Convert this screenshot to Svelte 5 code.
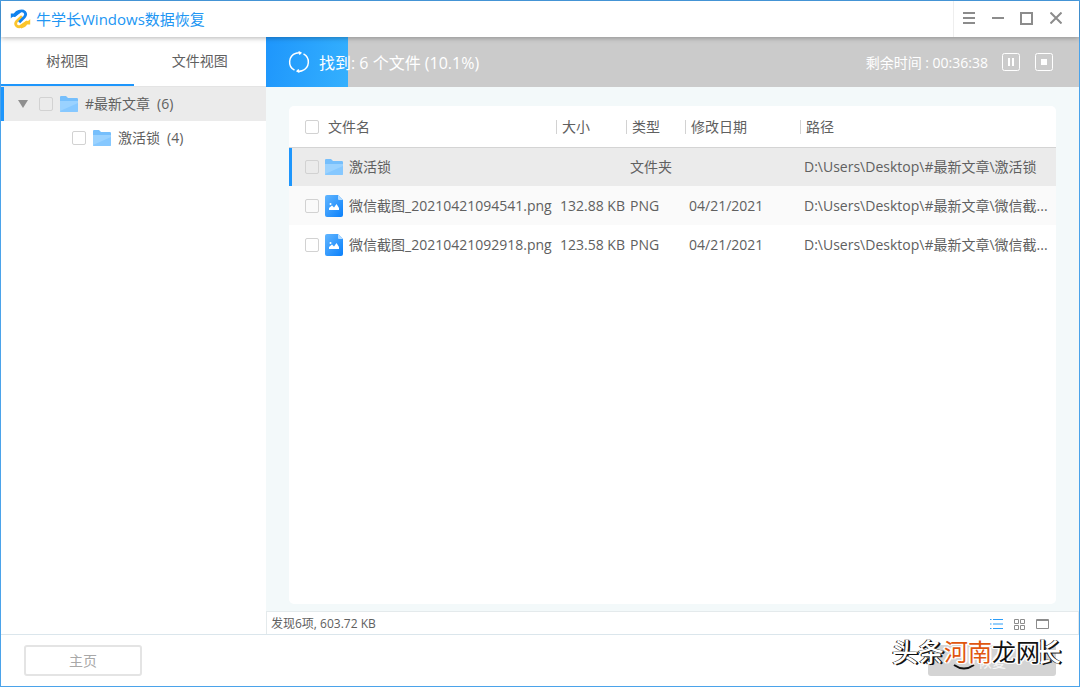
<script>
  const files = [
    { kind: 'folder', name: '激活锁', size: '', type: '文件夹', date: '', path: 'D:\\Users\\Desktop\\#最新文章\\激活锁', active: true },
    { kind: 'image', name: '微信截图_20210421094541.png', size: '132.88 KB', type: 'PNG', date: '04/21/2021', path: 'D:\\Users\\Desktop\\#最新文章\\微信截...' },
    { kind: 'image', name: '微信截图_20210421092918.png', size: '123.58 KB', type: 'PNG', date: '04/21/2021', path: 'D:\\Users\\Desktop\\#最新文章\\微信截...' }
  ];
  const progress = 10.1;
</script>

{#snippet folder()}
  <svg class="folder" width="18" height="16" viewBox="0 0 18 16" aria-hidden="true">
    <path d="M0 1.2Q0 0 1 0H6L8 2H16.8Q18 2 18 3V8H0Z" fill="#76bffc" />
    <path d="M0 5H18V15Q18 16 17 16H1Q0 16 0 15Z" fill="#9ad2ff" />
    <path d="M18 7V15Q18 16 17 16H1Q0 16 0 15Z" fill="#86c8ff" />
  </svg>
{/snippet}

{#snippet picture()}
  <svg class="picture" width="18" height="22" viewBox="0 0 18 22" aria-hidden="true">
    <defs>
      <linearGradient id="pic" x1="0" y1="0" x2="1" y2="1">
        <stop offset="0" stop-color="#62b6ff" />
        <stop offset="1" stop-color="#0a80fb" />
      </linearGradient>
    </defs>
    <path d="M2 0H13L18 5V20Q18 22 16 22H2Q0 22 0 20V2Q0 0 2 0Z" fill="url(#pic)" />
    <path d="M13 0L18 5H14Q13 5 13 4Z" fill="#b4dcff" />
    <path d="M4 15V13L7 10.5L9 12.5L11.5 9L14 13V15Z" fill="#fff" />
    <circle cx="5.5" cy="9" r="1" fill="#fff" />
  </svg>
{/snippet}

<div class="window">
  <header class="titlebar">
    <svg width="21" height="20" viewBox="0 0 21 20" fill="none" aria-hidden="true">
      <path d="M20.2 10V15.5H17Q15.5 18.6 11 19.4L10 16L16 12Q19 12.5 20.2 10Z" fill="#fbc52c" />
      <path d="M12 7.2L6.8 12.2Q4.6 14.8 6.6 16.8Q9.4 19 12.5 16.4L17.5 12.6" stroke="#fbc52c" stroke-width="2.8" />
      <path d="M.8 9.6V4.4H3.8Q5.5 1.6 9.5 .7L10.8 3.6L5 8Q2 7.2 .8 9.6Z" fill="#1283ee" />
      <path d="M3.8 6.8L8.6 3Q12 .8 14.6 3Q16.8 5.4 14.4 8L9.2 13.2" stroke="#1283ee" stroke-width="2.8" />
    </svg>
    <h1>牛学长Windows数据恢复</h1>
    <div class="controls">
      <button aria-label="菜单"><svg width="12" height="12" viewBox="0 0 12 12"><path d="M0 1H12M0 6H12M0 11H12" /></svg></button>
      <button aria-label="最小化"><svg width="12" height="12" viewBox="0 0 12 12"><path d="M0 6H12" /></svg></button>
      <button aria-label="最大化"><svg width="13" height="13" viewBox="0 0 13 13"><path d="M1 1H12V12H1Z" /></svg></button>
      <button aria-label="关闭"><svg width="12" height="12" viewBox="0 0 12 12"><path d="M.5 .5L11.5 11.5M11.5 .5L.5 11.5" /></svg></button>
    </div>
  </header>

  <div class="body">
    <aside>
      <nav class="tabs">
        <button class="on">树视图</button>
        <button>文件视图</button>
      </nav>
      <ul class="tree">
        <li class="node selected">
          <svg class="caret" width="10" height="8" viewBox="0 0 10 8" aria-hidden="true"><path d="M0 0H10L5 8Z" fill="#8f8f8f" /></svg>
          <label><input type="checkbox" />{@render folder()}<span>#最新文章</span><span>(6)</span></label>
        </li>
        <li class="node child">
          <label><input type="checkbox" />{@render folder()}<span>激活锁</span><span>(4)</span></label>
        </li>
      </ul>
    </aside>

    <main>
      <div class="scan">
        <div class="fill" style="width: {progress}%"></div>
        <svg class="spinner" width="22" height="22" viewBox="0 0 22 22" fill="none" stroke="#fff" stroke-width="1.5" aria-hidden="true">
          <path d="M6.5 19.2A9.3 9.3 0 0 1 8 2.2Q10 1.4 12.5 1.8M10.5 .8L12.8 1.9L11.2 3.6" />
          <path d="M15.5 2.8A9.3 9.3 0 0 1 14 19.8Q12 20.6 9.5 20.2M11.5 21.2L9.2 20.1L10.8 18.4" />
        </svg>
        <span class="found">找到: 6 个文件 (10.1%)</span>
        <span class="remain">剩余时间 : 00:36:38</span>
        <button aria-label="暂停"><svg width="18" height="18" viewBox="0 0 18 18"><rect x=".5" y=".5" width="17" height="17" rx="2" fill="none" stroke="#fff" /><path d="M6 5H8V13H6ZM10 5H12V13H10Z" fill="#fff" /></svg></button>
        <button aria-label="停止"><svg width="18" height="18" viewBox="0 0 18 18"><rect x=".5" y=".5" width="17" height="17" rx="2" fill="none" stroke="#fff" /><path d="M6 6H12V12H6Z" fill="#fff" /></svg></button>
      </div>

      <div class="panel">
        <table>
          <colgroup><col class="c-name" /><col class="c-size" /><col class="c-type" /><col class="c-date" /><col /></colgroup>
          <thead>
            <tr>
              <th><label><input type="checkbox" /><span>文件名</span></label></th>
              <th><span class="sep">大小</span></th>
              <th><span class="sep">类型</span></th>
              <th><span class="sep">修改日期</span></th>
              <th><span class="sep">路径</span></th>
            </tr>
          </thead>
          <tbody>
            {#each files as f}
              <tr class:active={f.active}>
                <td><label><input type="checkbox" />{#if f.kind === 'folder'}{@render folder()}{:else}{@render picture()}{/if}<span>{f.name}</span></label></td>
                <td>{f.size}</td>
                <td>{f.type}</td>
                <td>{f.date}</td>
                <td class="path">{f.path}</td>
              </tr>
            {/each}
          </tbody>
        </table>
      </div>

      <div class="status">
        <span>发现6项, 603.72 KB</span>
        <div class="views">
          <button aria-label="列表"><svg width="13" height="10" viewBox="0 0 13 10" stroke="#2b9df8"><path d="M3 .5H13M3 5H13M3 9.5H13M0 .5H1.5M0 5H1.5M0 9.5H1.5" /></svg></button>
          <button aria-label="网格"><svg width="11" height="11" viewBox="0 0 11 11" fill="none" stroke="#8c8c8c"><path d="M.5 .5H4.5V4.5H.5ZM6.5 .5H10.5V4.5H6.5ZM.5 6.5H4.5V10.5H.5ZM6.5 6.5H10.5V10.5H6.5Z" /></svg></button>
          <button aria-label="预览"><svg width="13" height="10" viewBox="0 0 13 10" fill="none" stroke="#8c8c8c"><path d="M.5 .5H12.5V9.5H.5ZM.5 1.5H12.5" /></svg></button>
        </div>
      </div>
    </main>
  </div>

  <footer>
    <button class="home">主页</button>
    <div class="action">
      <button class="recover">恢复</button>
      <svg class="at" width="22" height="6" viewBox="0 0 22 6" fill="none" aria-hidden="true">
        <path d="M1 1Q11 8 21 1" stroke="#111" stroke-width="2" />
      </svg>
      <div class="mark"><span class="relief">头条</span><span class="site"><b>河南</b>龙网</span><span class="relief">长</span></div>
    </div>
  </footer>
</div>

<style>
  :global(body) { margin: 0; }
  * { box-sizing: border-box; }
  .window {
    height: 100vh;
    display: flex;
    flex-direction: column;
    border: 1px solid #4ba3ea;
    background: #fff;
    color: #606060;
    font: 14px/20px "Open Sans", "Noto Sans CJK SC", sans-serif;
  }
  button { font: inherit; color: inherit; background: none; border: 0; padding: 0; }
  .titlebar {
    height: 36px;
    flex: none;
    display: flex;
    align-items: center;
    gap: 5px;
    padding-left: 9px;
    position: relative;
    z-index: 2;
    background: #fff;
    box-shadow: 0 1px 5px rgba(0, 0, 0, .3);
  }
  h1 { margin: 0; font-size: 15px; font-weight: 400; color: #2196f3; }
  .controls { margin-left: auto; align-self: stretch; display: flex; border-left: 1px solid #eee; padding: 0 9px 2px 0; }
  .controls button { width: 29px; display: grid; place-items: center; }
  .controls svg { fill: none; stroke: #8c8c8c; stroke-width: 2; }
  .body { flex: 1; min-height: 0; display: flex; }
  aside { width: 265px; flex: none; }
  .tabs { display: flex; height: 50px; border-bottom: 1px solid #e4e4e4; }
  .tabs button { flex: 1; padding-top: 1px; border-bottom: 2px solid transparent; }
  .tabs .on { border-color: #1e96fc; }
  .tree { list-style: none; margin: 0; padding: 0; }
  .node { display: flex; align-items: center; height: 34px; padding-left: 71px; }
  .node.selected { padding-left: 14px; gap: 11px; background: #ebebeb; border-left: 3px solid #1e96fc; }
  label { display: flex; align-items: center; gap: 7px; }
  input { appearance: none; width: 14px; height: 14px; margin: 0; border: 1px solid #d2d2d2; border-radius: 2px; flex: none; }
  svg { flex: none; display: block; }
  main { flex: 1; min-width: 0; display: flex; flex-direction: column; background: #f3f9fa; }
  .scan { height: 50px; flex: none; display: flex; align-items: center; position: relative; padding: 0 26px 0 22px; background: #cbcbcb; color: #fff; gap: 15px; }
  .fill { position: absolute; inset: 0 auto 0 0; background: linear-gradient(100deg, #1e96fc, #34b0fe); }
  .spinner, .found { position: relative; }
  .found { font-size: 16px; line-height: 24px; padding-top: 2px; margin-right: auto; margin-left: -6px; }
  .remain { padding-top: 1px; margin-right: -1px; }
  .panel { flex: 1; margin: 19px 23px 7px; background: #fff; border-radius: 5px; overflow: hidden; }
  table { width: 100%; table-layout: fixed; border-collapse: collapse; }
  .c-name { width: 267px; }
  .c-size { width: 70px; }
  .c-type { width: 59px; }
  .c-date { width: 115px; }
  th, td { padding: 1px 0 0; text-align: left; font-weight: 400; white-space: nowrap; height: 39px; }
  th { height: 41px; border-bottom: 1px solid #d4d4d4; }
  th:first-child, td:first-child { padding-left: 16px; }
  th label { gap: 9px; }
  .sep { display: block; line-height: 14px; border-left: 1px solid #d2d2d2; padding-left: 5px; }
  td { padding-left: 4px; }
  tbody tr:nth-child(2) { background: #fafafa; }
  tbody tr.active { background: #ebebeb; box-shadow: inset 3px 0 #1e96fc; }
  td label { gap: 6px; }
  .path { overflow: hidden; text-overflow: ellipsis; }
  .status { height: 23px; flex: none; display: flex; align-items: center; justify-content: space-between; padding: 2px 29px 0 4px; background: #fff; border: 1px solid #e4eaec; border-bottom: 0; font-size: 12px; }
  .views { display: flex; align-items: center; gap: 11px; }
  footer { height: 52px; flex: none; display: flex; align-items: center; justify-content: space-between; padding: 0 23px; border-top: 1px solid #dbe6ec; }
  .home { width: 118px; height: 31px; border: 2px solid #e4e4e4; border-radius: 3px; color: #a8a8a8; }
  .action { position: relative; }
  .recover { display: block; width: 128px; height: 31px; border-radius: 3px; background: #d4d4d4; color: #f4f4f4; padding-top: 3px; }
  .at { position: absolute; left: 25px; top: 19px; }
  .mark { position: absolute; right: -5px; top: -11px; display: flex; white-space: nowrap; font-size: 26px; line-height: 36px; color: #111; }
  .relief { color: #fff; font-weight: 500; text-shadow: -1px 0 #111, 1px 0 #111, 2px 1px #111; }
  .relief:last-child { margin-left: -5px; }
  .site { position: relative; z-index: 1; font-size: 24px; text-shadow: 1px 1px #fff, -1px -1px #fff, 1px -1px #fff, -1px 1px #fff, 2px 0 #fff, -2px 0 #fff; }
  .site b { font-weight: 400; color: #e0560f; }
</style>
